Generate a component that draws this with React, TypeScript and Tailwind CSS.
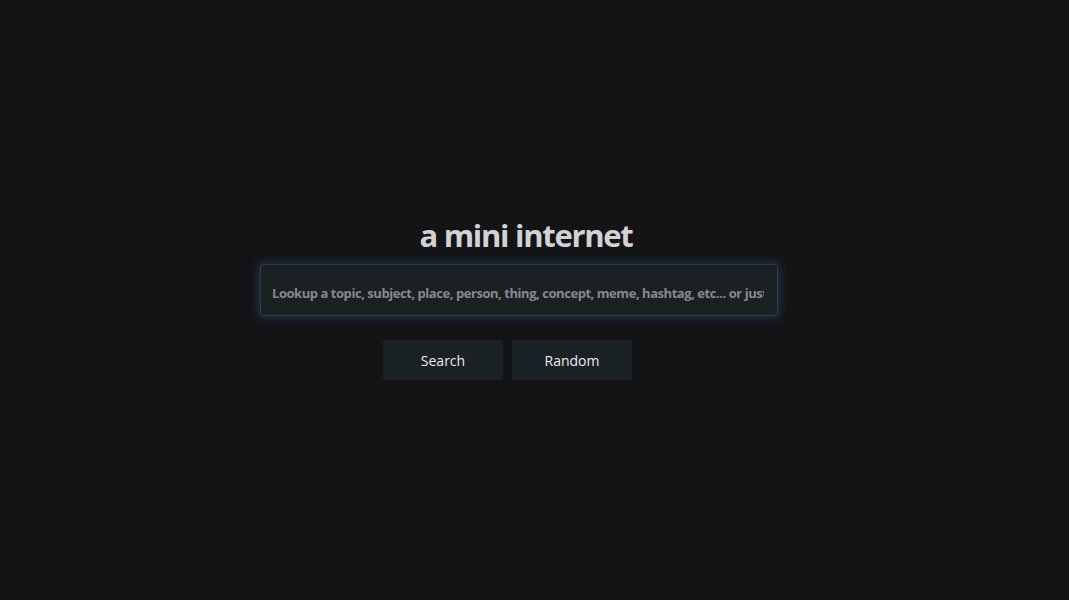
import React, { useState } from 'react';

const App: React.FC = () => {
  const [query, setQuery] = useState<string>('');

  return (
    <div className="min-h-screen w-full bg-[#131416] font-['Open_Sans',sans-serif]">
      <div className="w-[518px] ml-[260px] pt-[213px] flex flex-col">
        <h1 className="text-center pl-[14px] text-[31px] leading-[44px] font-bold tracking-[-1.3px] text-[#d2d2d2]">
          a mini internet
        </h1>
        <input
          type="text"
          autoFocus
          value={query}
          onChange={e => setQuery(e.target.value)}
          placeholder="Lookup a topic, subject, place, person, thing, concept, meme, hashtag, etc... or just type anything"
          className="mt-[7px] h-[52px] w-full rounded-[3px] border border-[#2a3e50] bg-[#1b2023] pl-[11px] pr-[13px] pt-[5px] text-[13px] font-bold tracking-[-0.45px] text-[#d0d0d0] placeholder:text-[#878a8d] caret-white outline-none shadow-[0_0_10px_2px_rgba(55,100,140,0.4)]"
        />
        <div className="mt-[24px] flex justify-center gap-[9px] pr-[23px]">
          <button className="w-[120px] h-[40px] rounded-[3px] bg-[#1b2225] text-[14px] font-medium text-[#ececec]">
            Search
          </button>
          <button className="w-[120px] h-[40px] rounded-[3px] bg-[#1b2225] text-[14px] font-medium text-[#ececec]">
            Random
          </button>
        </div>
      </div>
    </div>
  );
};

export default App;
